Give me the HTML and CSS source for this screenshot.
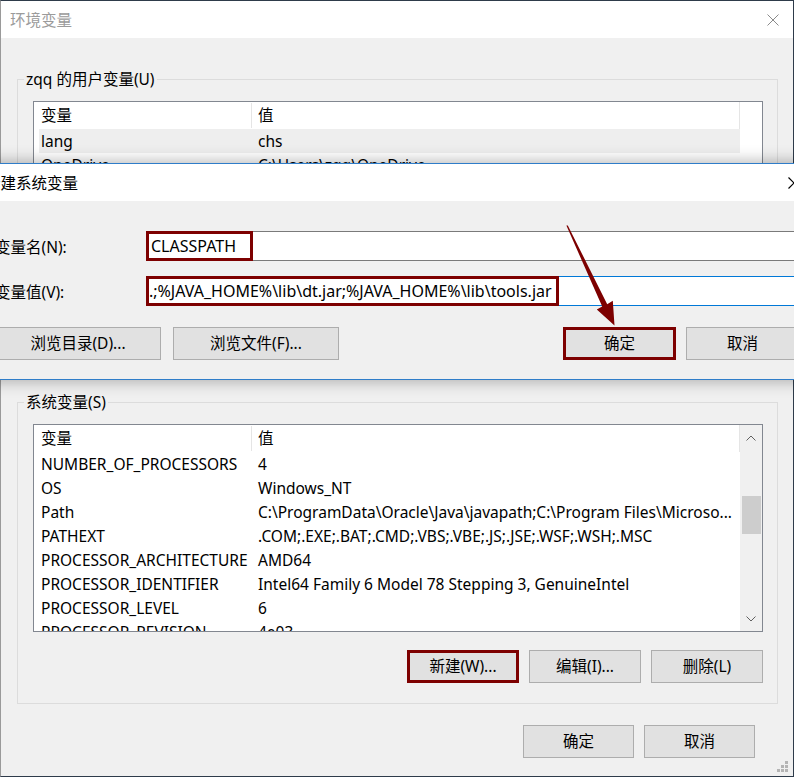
FILE: index.html
```html
<!DOCTYPE html>
<html lang="zh-CN">

<head>
  <meta charset="utf-8">
  <title>环境变量</title>
  <link rel="stylesheet" href="styles.css">
</head>

<body>
  <!-- 环境变量窗口 -->
  <div class="window">
    <div class="titlebar">
      <span class="title">环境变量</span>
      <svg class="close" width="12" height="12" viewBox="0 0 12 12">
        <path d="M0.5 0.5L11.5 11.5M11.5 0.5L0.5 11.5" stroke="#8a8a8a" stroke-width="1" fill="none" />
      </svg>
    </div>
    <div class="window-body">
      <!-- 用户变量 -->
      <fieldset class="group group-user">
        <legend>zqq 的用户变量(U)</legend>
        <div class="list list-user">
          <div class="rows">
            <div class="list-head"><span class="cell-name">变量</span><span class="cell-value">值</span></div>
            <div class="row selected"><span class="cell-name">lang</span><span class="cell-value">chs</span></div>
            <div class="row"><span class="cell-name">OneDrive</span><span class="cell-value">C:\Users\zqq\OneDrive</span></div>
            <div class="row"><span class="cell-name">Path</span><span class="cell-value">C:\Users\zqq\AppData\Local\Microsoft\WindowsApps;</span></div>
            <div class="row"><span class="cell-name">TEMP</span><span class="cell-value">C:\Users\zqq\AppData\Local\Temp</span></div>
          </div>
          <div class="scroll-blank"></div>
        </div>
        <div class="btn-row">
          <button class="btn">新建(N)...</button>
          <button class="btn">编辑(E)...</button>
          <button class="btn">删除(D)</button>
        </div>
      </fieldset>

      <!-- 系统变量 -->
      <fieldset class="group group-system">
        <legend>系统变量(S)</legend>
        <div class="list list-system">
          <div class="rows">
            <div class="list-head"><span class="cell-name">变量</span><span class="cell-value">值</span></div>
            <div class="row"><span class="cell-name">NUMBER_OF_PROCESSORS</span><span class="cell-value">4</span></div>
            <div class="row"><span class="cell-name">OS</span><span class="cell-value">Windows_NT</span></div>
            <div class="row"><span class="cell-name">Path</span><span class="cell-value">C:\ProgramData\Oracle\Java\javapath;C:\Program Files\Microso...</span></div>
            <div class="row"><span class="cell-name">PATHEXT</span><span class="cell-value">.COM;.EXE;.BAT;.CMD;.VBS;.VBE;.JS;.JSE;.WSF;.WSH;.MSC</span></div>
            <div class="row"><span class="cell-name">PROCESSOR_ARCHITECTURE</span><span class="cell-value">AMD64</span></div>
            <div class="row"><span class="cell-name">PROCESSOR_IDENTIFIER</span><span class="cell-value">Intel64 Family 6 Model 78 Stepping 3, GenuineIntel</span></div>
            <div class="row"><span class="cell-name">PROCESSOR_LEVEL</span><span class="cell-value">6</span></div>
            <div class="row"><span class="cell-name">PROCESSOR_REVISION</span><span class="cell-value">4e03</span></div>
          </div>
          <div class="scrollbar">
            <svg class="arrow-up" width="10" height="6" viewBox="0 0 10 6">
              <path d="M0.5 5.5L5 1L9.5 5.5" stroke="#606060" fill="none" />
            </svg>
            <div class="thumb"></div>
            <svg class="arrow-down" width="10" height="6" viewBox="0 0 10 6">
              <path d="M0.5 0.5L5 5L9.5 0.5" stroke="#606060" fill="none" />
            </svg>
          </div>
        </div>
        <div class="btn-row">
          <button class="btn marked">新建(W)...</button>
          <button class="btn">编辑(I)...</button>
          <button class="btn">删除(L)</button>
        </div>
      </fieldset>

      <div class="btn-row footer">
        <button class="btn">确定</button>
        <button class="btn">取消</button>
      </div>
    </div>
    <svg class="grip" width="12" height="12" viewBox="0 0 12 12">
      <rect x="8" y="0" width="3" height="3" fill="#b4b4b4" />
      <rect x="4" y="4" width="3" height="3" fill="#b4b4b4" />
      <rect x="8" y="4" width="3" height="3" fill="#b4b4b4" />
      <rect x="0" y="8" width="3" height="3" fill="#b4b4b4" />
      <rect x="4" y="8" width="3" height="3" fill="#b4b4b4" />
      <rect x="8" y="8" width="3" height="3" fill="#b4b4b4" />
    </svg>
  </div>

  <!-- 新建系统变量对话框 -->
  <div class="dialog">
    <div class="dialog-title">
      <span>新建系统变量</span>
      <svg class="dialog-close" width="12" height="12" viewBox="0 0 12 12">
        <path d="M0.5 0.5L11.5 11.5M11.5 0.5L0.5 11.5" stroke="#000" stroke-width="1.2" fill="none" />
      </svg>
    </div>
    <div class="dialog-body">
      <div class="field">
        <label class="field-label">变量名(N):</label>
        <div class="input"><span class="mark mark-name">CLASSPATH</span></div>
      </div>
      <div class="field">
        <label class="field-label">变量值(V):</label>
        <div class="input focused"><span class="mark mark-value">.;%JAVA_HOME%\lib\dt.jar;%JAVA_HOME%\lib\tools.jar</span></div>
      </div>
      <div class="dialog-buttons">
        <button class="btn btn-wide">浏览目录(D)...</button>
        <button class="btn btn-wide">浏览文件(F)...</button>
        <button class="btn btn-dlg marked push-right">确定</button>
        <button class="btn btn-dlg">取消</button>
      </div>
    </div>
  </div>

  <!-- 标注箭头 -->
  <svg class="pointer" width="794" height="777" viewBox="0 0 794 777">
    <polygon points="566.4,225.6 567.8,225.4 607.2,304.2 612.8,300.8 614.5,325.5 596.8,309.6 602.2,306.6" fill="#7d0000" />
  </svg>
</body>

</html>
```

FILE: styles.css
```css
* {
  padding: 0;
  margin: 0;
  box-sizing: border-box;
}

body {
  width: 794px;
  height: 777px;
  overflow: hidden;
  position: relative;
  background-color: #f0f0f0;
  font-family: "Noto Sans", "Noto Sans CJK SC", sans-serif;
  font-size: 15.5px;
  color: #000;
}

button {
  font: inherit;
  color: inherit;
}

/* 环境变量窗口 */
.window {
  width: 794px;
  height: 777px;
  border: 1px solid #2e3b4a;
  border-left-color: #9a9a9a;
  background-color: #f0f0f0;
  position: relative;
}

.titlebar {
  height: 37px;
  background-color: #fff;
  display: flex;
  align-items: center;
  justify-content: space-between;
  padding: 0 14px 0 9px;
}

.titlebar .title {
  color: #9b9b9b;
  line-height: 20px;
}

.window-body {
  padding: 32px 15px 0 16px;
}

.group {
  border: 1px solid #dcdcdc;
  padding: 13px 14px 20px 15px;
  min-width: 0;
}

.group legend {
  line-height: 18px;
  padding: 0 2px;
  margin-left: -9px;
}

.group-user {
  padding-bottom: 19px;
}

.group-system {
  margin-top: 39px;
}

/* 列表 */
.list {
  border: 1px solid #828790;
  background-color: #fff;
  display: flex;
  overflow: hidden;
}

.list-user {
  height: 181px;
}

.list-system {
  height: 208px;
}

.rows {
  flex: 1;
  padding-left: 5px;
  min-width: 0;
}

.list-head,
.row {
  display: flex;
  white-space: nowrap;
}

.list-head {
  height: 27px;
  line-height: 27px;
  border-right: 1px solid #e5e5e5;
}

.row {
  height: 24px;
  line-height: 24px;
}

.row.selected {
  background-color: #eeeeee;
}

.cell-name {
  width: 213px;
  padding-left: 2px;
  flex-shrink: 0;
}

.list-head .cell-name {
  border-right: 1px solid #e5e5e5;
  height: 25px;
  margin-top: 1px;
  line-height: 25px;
}

.cell-value {
  padding-left: 6px;
}

.scroll-blank {
  width: 22px;
}

.scrollbar {
  width: 22px;
  background-color: #f0f0f0;
  display: flex;
  flex-direction: column;
  align-items: center;
}

.scrollbar .arrow-up {
  margin-top: 10px;
}

.scrollbar .thumb {
  width: 19px;
  height: 38px;
  margin-top: 55px;
  background-color: #cdcdcd;
}

.scrollbar .arrow-down {
  margin-top: auto;
  margin-bottom: 9px;
}

/* 按钮 */
.btn-row {
  display: flex;
  justify-content: flex-end;
  gap: 10px;
  margin-top: 18px;
}

.group-user .btn-row {
  margin-top: 19px;
}

.btn {
  width: 112px;
  height: 33px;
  background-color: #e1e1e1;
  border: 1px solid #adadad;
  line-height: 31px;
  text-align: center;
}

.btn.marked {
  border: 3px solid #7d0000;
  line-height: 27px;
}

.footer {
  margin-top: 21px;
  padding-right: 23px;
}

.footer .btn {
  width: 111px;
}

.grip {
  position: absolute;
  right: 4px;
  bottom: 3px;
}

/* 新建系统变量对话框 */
.dialog {
  position: absolute;
  left: -24px;
  top: 163px;
  width: 842px;
  height: 217px;
  border: 1px solid #2f7dc9;
  background-color: #f0f0f0;
  box-shadow: 0 0 14px 2px rgba(0, 0, 0, .28);
}

.dialog-title {
  height: 37px;
  background-color: #fff;
  display: flex;
  align-items: center;
  justify-content: space-between;
  padding: 0 17px 0 8px;
  line-height: 20px;
}

.dialog-body {
  padding: 30px 18px 0 18px;
}

.field {
  display: flex;
  align-items: center;
  margin-bottom: 15px;
}

.field-label {
  width: 151px;
  flex-shrink: 0;
}

.input {
  flex: 1;
  height: 30px;
  border: 1px solid #7a7a7a;
  background-color: #fff;
  display: flex;
  font-size: 16px;
}

.input.focused {
  border-color: #0078d7;
}

.mark {
  border: 3px solid #7d0000;
  margin: -1px 0 -1px -1px;
  line-height: 24px;
  white-space: nowrap;
  overflow: hidden;
}

.mark-name {
  width: 107px;
  padding-left: 2px;
}

.mark-value {
  width: 413px;
  padding-left: 0;
}

.dialog-buttons {
  display: flex;
  gap: 12px;
  margin-top: 21px;
}

.btn-wide {
  width: 166px;
}

.btn-dlg {
  width: 113px;
}

.btn-dlg + .btn-dlg {
  margin-left: -2px;
}

.push-right {
  margin-left: auto;
}

/* 标注箭头 */
.pointer {
  position: absolute;
  left: 0;
  top: 0;
  pointer-events: none;
}
```
